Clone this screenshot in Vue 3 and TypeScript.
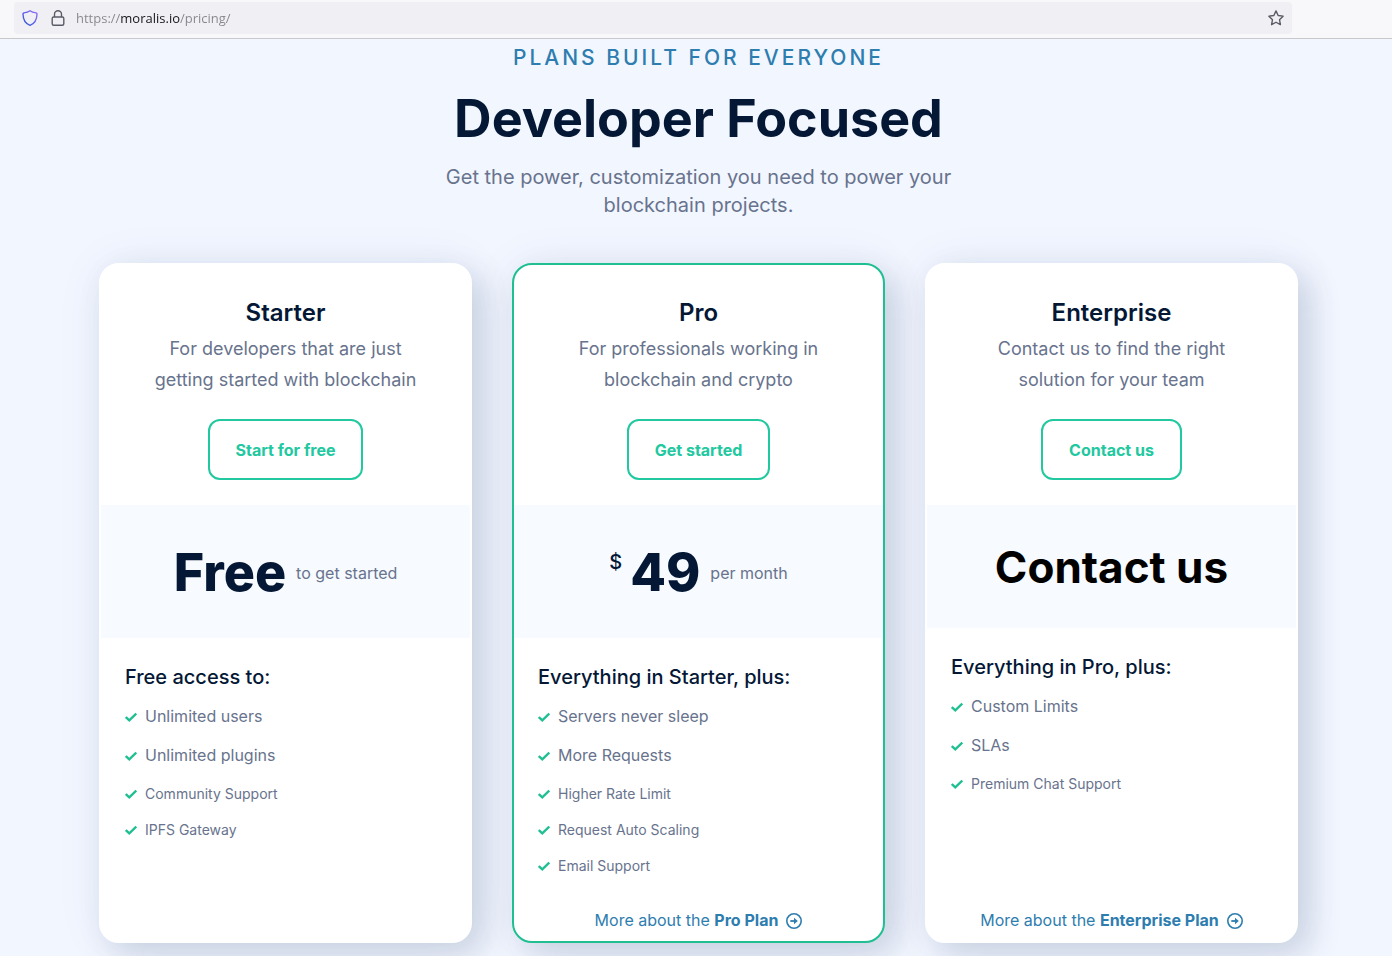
<script setup lang="ts">
import { ref } from 'vue'

interface Feature {
  label: string
  small?: boolean
}

interface Plan {
  name: string
  tagline: [string, string]
  action: string
  currency?: string
  price: string
  note?: string
  heading: string
  features: Feature[]
  more?: string
  featured?: boolean
}

const address = ref('https://moralis.io/pricing/')

const plans: Plan[] = [
  {
    name: 'Starter',
    tagline: ['For developers that are just', 'getting started with blockchain'],
    action: 'Start for free',
    price: 'Free',
    note: 'to get started',
    heading: 'Free access to:',
    features: [
      { label: 'Unlimited users' },
      { label: 'Unlimited plugins' },
      { label: 'Community Support', small: true },
      { label: 'IPFS Gateway', small: true },
    ],
  },
  {
    name: 'Pro',
    tagline: ['For professionals working in', 'blockchain and crypto'],
    action: 'Get started',
    currency: '$',
    price: '49',
    note: 'per month',
    heading: 'Everything in Starter, plus:',
    features: [
      { label: 'Servers never sleep' },
      { label: 'More Requests' },
      { label: 'Higher Rate Limit', small: true },
      { label: 'Request Auto Scaling', small: true },
      { label: 'Email Support', small: true },
    ],
    more: 'Pro Plan',
    featured: true,
  },
  {
    name: 'Enterprise',
    tagline: ['Contact us to find the right', 'solution for your team'],
    action: 'Contact us',
    price: 'Contact us',
    heading: 'Everything in Pro, plus:',
    features: [
      { label: 'Custom Limits' },
      { label: 'SLAs' },
      { label: 'Premium Chat Support', small: true },
    ],
    more: 'Enterprise Plan',
  },
]
</script>

<template>
  <div class="page">
    <header class="toolbar">
      <div class="address">
        <svg class="icon" viewBox="0 0 16 16" aria-hidden="true">
          <defs>
            <linearGradient id="shield" x1="0" y1="1" x2="1" y2="0">
              <stop offset="0" stop-color="#2a55d8" />
              <stop offset="0.5" stop-color="#5b62ea" />
              <stop offset="1" stop-color="#a06bf8" />
            </linearGradient>
          </defs>
          <path
            d="M8 .8C6.2 2.2 4 2.7 1.9 2.9c-.6.1-.9.5-.9 1C1.1 8.6 2.5 13.2 8 15.3 13.5 13.2 14.9 8.6 15 3.9c0-.5-.3-.9-.9-1C12 2.7 9.800 2.2 8 .8z"
            fill="none"
            stroke="url(#shield)"
            stroke-width="1.4"
            stroke-linejoin="round"
          />
        </svg>
        <svg class="icon" viewBox="0 0 16 16" aria-hidden="true">
          <rect x="2.2" y="7" width="11.6" height="8.3" rx="1.5" fill="none" stroke="#5b5b66" stroke-width="1.4" />
          <path d="M4.500 7V4.200a3.500 3.500 0 0 1 7 0V7" fill="none" stroke="#5b5b66" stroke-width="1.4" />
        </svg>
        <input v-model="address" class="url" type="text" aria-label="Address" spellcheck="false" />
        <button class="bookmark" type="button" aria-label="Bookmark this page">
          <svg class="icon" viewBox="0 0 16 16" aria-hidden="true">
            <path
              d="M8 .9l2.150 4.550 4.950.700-3.600 3.500.900 5-4.400-2.400-4.400 2.400.900-5L.9 6.150l4.950-.700z"
              fill="none"
              stroke="#5b5b66"
              stroke-width="1.4"
              stroke-linejoin="round"
            />
          </svg>
        </button>
      </div>
    </header>

    <main class="content">
      <div class="intro">
        <p class="eyebrow">Plans built for everyone</p>
        <h1 class="title">Developer Focused</h1>
        <p class="lead">Get the power, customization you need to power your<br />blockchain projects.</p>
      </div>

      <div class="plans">
        <section v-for="plan in plans" :key="plan.name" class="card" :class="{ featured: plan.featured }">
          <div class="top">
            <h2 class="name">{{ plan.name }}</h2>
            <p class="tagline">{{ plan.tagline[0] }}<br />{{ plan.tagline[1] }}</p>
            <button class="action" type="button">{{ plan.action }}</button>
          </div>

          <div class="band" :class="{ plain: !plan.note }">
            <span v-if="plan.currency" class="currency">{{ plan.currency }}</span>
            <span class="price">{{ plan.price }}</span>
            <span v-if="plan.note" class="note">{{ plan.note }}</span>
          </div>

          <div class="details">
            <h3 class="heading">{{ plan.heading }}</h3>
            <ul class="features">
              <li v-for="f in plan.features" :key="f.label" class="feature" :class="{ small: f.small }">
                <svg class="check" viewBox="0 0 12 12" aria-hidden="true">
                  <path d="M.8 6l3.500 3.300L11.300 2.500" fill="none" stroke="#1fbf92" stroke-width="2.400" />
                </svg>
                {{ f.label }}
              </li>
            </ul>
            <a v-if="plan.more" class="more" href="#">
              <span>More about the <strong>{{ plan.more }}</strong></span>
              <svg class="icon" viewBox="0 0 16 16" aria-hidden="true">
                <circle cx="8" cy="8" r="7.200" fill="none" stroke="currentColor" stroke-width="1.600" />
                <path d="M4.300 8h5" fill="none" stroke="currentColor" stroke-width="1.800" />
                <path d="M8 4.700L11.800 8 8 11.300z" fill="currentColor" />
              </svg>
            </a>
          </div>
        </section>
      </div>
    </main>
  </div>
</template>

<style>
body {
  margin: 0;
  background: #f2f6ff;
}
</style>

<style scoped>
.page {
  min-height: 100vh;
  box-sizing: border-box;
  overflow: hidden;
  background: #f2f6ff;
  color: #68738d;
  font-family: Inter, "Liberation Sans", sans-serif;
}

h1,
h2,
h3,
p,
ul {
  margin: 0;
  padding: 0;
}

.icon {
  display: block;
  width: 16px;
  height: 16px;
  flex: none;
}

.toolbar {
  padding: 2px 100px 4px 14px;
  background: #f8f8fa;
  border-bottom: 1px solid #c8c8cc;
}

.address {
  display: flex;
  align-items: center;
  gap: 12px;
  height: 32px;
  padding: 0 8px;
  border-radius: 4px;
  background: #f0f0f4;
}

.url {
  flex: 1;
  min-width: 0;
  margin-left: -2px;
  padding: 0;
  border: 0;
  outline: 0;
  color: transparent;
  background: linear-gradient(90deg, #85858c 45px, #15141a 45px, #15141a 104px, #85858c 104px);
  background-clip: text;
  -webkit-background-clip: text;
  font: 13px/20px "Open Sans", "Noto Sans", sans-serif;
}

.bookmark {
  padding: 0;
  border: 0;
  background: none;
}

.content {
  padding: 0 94px 13px 99px;
}

.intro {
  text-align: center;
}

.eyebrow {
  padding-top: 5px;
  color: #2e7daf;
  font-size: 21px;
  font-weight: 500;
  line-height: 28px;
  letter-spacing: 3px;
  text-transform: uppercase;
}

.title {
  margin-top: 15px;
  color: #041836;
  font-size: 52px;
  font-weight: 700;
  line-height: 64px;
}

.lead {
  margin-top: 12px;
  font-size: 20px;
  line-height: 28px;
}

.plans {
  display: grid;
  grid-template-columns: repeat(3, 1fr);
  gap: 40px;
  margin-top: 44px;
}

.card {
  display: flex;
  flex-direction: column;
  border: 2px solid #fff;
  border-radius: 20px;
  background: #fff;
  box-shadow: 0 0 50px rgba(40, 50, 120, 0.06), 12px 12px 32px rgba(20, 50, 90, 0.16);
}

.card.featured {
  border-color: #1fbf92;
}

.top {
  display: flex;
  flex-direction: column;
  align-items: center;
  padding: 32px 24px 25px;
  text-align: center;
}

.name {
  color: #041836;
  font-size: 24px;
  font-weight: 600;
  line-height: 32px;
}

.tagline {
  margin-top: 4px;
  font-size: 18px;
  line-height: 31px;
}

.action {
  margin-top: 24px;
  padding: 17px 26px 15px;
  border: 2px solid #21c8a0;
  border-radius: 12px;
  background: #fff;
  color: #21c8a0;
  font: inherit;
  font-size: 16px;
  font-weight: 700;
  line-height: 25px;
}

.band {
  display: flex;
  align-items: center;
  justify-content: center;
  padding: 36px 0 33px;
  background: #f7faff;
}

.band.plain {
  padding: 30px 0 29px;
}

.price {
  color: #041836;
  font-size: 52px;
  font-weight: 800;
  line-height: 64px;
}

.plain .price {
  color: #000;
  font-size: 44px;
  font-weight: 700;
}

.currency {
  align-self: flex-start;
  margin-right: 8px;
  padding-top: 7px;
  color: #041836;
  font-size: 20px;
  font-weight: 500;
  line-height: 28px;
}

.note {
  margin-left: 10px;
  font-size: 16px;
  line-height: 27px;
}

.details {
  display: flex;
  flex: 1;
  flex-direction: column;
  padding: 25px 24px 7px;
}

.heading {
  color: #041836;
  font-size: 20px;
  font-weight: 500;
  line-height: 28px;
}

.features {
  display: grid;
  gap: 12px;
  margin: 12px 0 30px;
  list-style: none;
}

.feature {
  display: flex;
  align-items: center;
  gap: 8px;
  font-size: 16px;
  line-height: 27px;
}

.feature.small {
  padding-top: 2px;
  font-size: 14px;
  line-height: 22px;
}

.check {
  width: 12px;
  height: 12px;
  flex: none;
}

.more {
  display: flex;
  align-items: center;
  justify-content: center;
  gap: 8px;
  margin-top: auto;
  color: #2e7daf;
  font-size: 16px;
  line-height: 27px;
  text-decoration: none;
}

.more strong {
  font-weight: 700;
}
</style>
